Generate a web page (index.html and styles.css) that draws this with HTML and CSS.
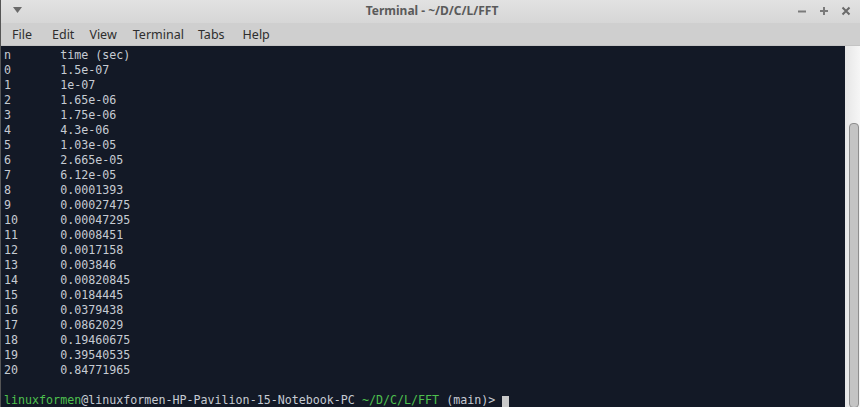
FILE: index.html
```html
<!DOCTYPE html>
<html>
<head>
<meta charset="utf-8">
<link rel="stylesheet" href="styles.css">
</head>
<body>
<div class="window">
  <div class="titlebar">
    <div class="menu-arrow"><svg width="9" height="6" viewBox="0 0 9 6"><path d="M0 0 H9 L4.5 6 Z" fill="#6a6a6a"/></svg></div>
    <div class="title">Terminal - ~/D/C/L/FFT</div>
    <div class="controls">
      <svg width="10" height="10" viewBox="0 0 10 10"><path d="M1 5.5 H9" stroke="#7a7a7a" stroke-width="2"/></svg>
      <svg width="10" height="10" viewBox="0 0 10 10"><path d="M1 5 H9 M5 1 V9" stroke="#7a7a7a" stroke-width="2"/></svg>
      <svg width="10" height="10" viewBox="0 0 10 10"><path d="M1.5 1.5 L8.5 8.5 M8.5 1.5 L1.5 8.5" stroke="#6a6a6a" stroke-width="2"/></svg>
    </div>
  </div>
  <div class="menubar">
    <span class="m-file">File</span><span class="m-edit">Edit</span><span class="m-view">View</span><span class="m-term">Terminal</span><span class="m-tabs">Tabs</span><span class="m-help">Help</span>
  </div>
  <div class="term-wrap">
    <pre class="term">n       time (sec)
0       1.5e-07
1       1e-07
2       1.65e-06
3       1.75e-06
4       4.3e-06
5       1.03e-05
6       2.665e-05
7       6.12e-05
8       0.0001393
9       0.00027475
10      0.00047295
11      0.0008451
12      0.0017158
13      0.003846
14      0.00820845
15      0.0184445
16      0.0379438
17      0.0862029
18      0.19460675
19      0.39540535
20      0.84771965

<span class="green">linuxformen</span>@linuxformen-HP-Pavilion-15-Notebook-PC <span class="green">~/D/C/L/FFT</span> (main)&gt; <span class="cursor"> </span></pre>
    <div class="scrollbar"><div class="thumb"></div></div>
  </div>
</div>
</body>
</html>
```
FILE: styles.css
```css
html, body {
  margin: 0;
  padding: 0;
  background: #131926;
}
.window {
  width: 860px;
  height: 407px;
  display: flex;
  flex-direction: column;
  overflow: hidden;
  border-left: 1px solid #555;
  box-sizing: border-box;
}
.titlebar {
  height: 23px;
  flex-shrink: 0;
  background: linear-gradient(#e2e2e2, #d6d6d6);
  display: flex;
  align-items: center;
  font-family: "Noto Sans", sans-serif;
}
.menu-arrow {
  width: 9px;
  height: 6px;
  margin-left: 12px;
  margin-top: -4px;
  display: flex;
}
.title {
  flex: 1;
  text-align: center;
  font-size: 12px;
  font-weight: bold;
  color: #5a5a5a;
  margin-left: 45px;
  margin-top: -2px;
}
.controls {
  display: flex;
  gap: 12px;
  margin-right: 9px;
  margin-top: -2px;
}
.menubar {
  height: 22px;
  flex-shrink: 0;
  background: #cfcfcf;
  display: flex;
  align-items: center;
  font-family: "Noto Sans", sans-serif;
  font-size: 12.5px;
  color: #2e2e2e;
  padding-left: 11px;
  border-bottom: 1px solid #c4c4c4;
}
.m-file { margin-right: 20px; }
.m-edit { margin-right: 15px; }
.m-view { margin-right: 16px; }
.m-term { margin-right: 14px; }
.m-tabs { margin-right: 18px; }
.term-wrap {
  flex: 1;
  display: flex;
  background: #131926;
}
.term {
  flex: 1;
  margin: 0;
  padding: 2px 0 0 3px;
  font-family: "DejaVu Sans Mono", monospace;
  font-size: 11.67px;
  line-height: 15px;
  color: #c6cbd3;
  white-space: pre;
  overflow: hidden;
}
.green {
  color: #4ec04e;
}
.cursor {
  display: inline-block;
  width: 7px;
  height: 14px;
  background: #c9c9c9;
  vertical-align: -3px;
}
.scrollbar {
  width: 15px;
  background: linear-gradient(90deg, #e6e6e6, #f6f6f6);
  display: flex;
  justify-content: center;
  padding-top: 77px;
  padding-bottom: 4px;
  box-sizing: border-box;
}
.thumb {
  width: 8px;
  height: 100%;
  background: #c4c4c4;
  border: 1px solid #8e8e8e;
  border-radius: 4px;
  margin-left: 2px;
}
```
